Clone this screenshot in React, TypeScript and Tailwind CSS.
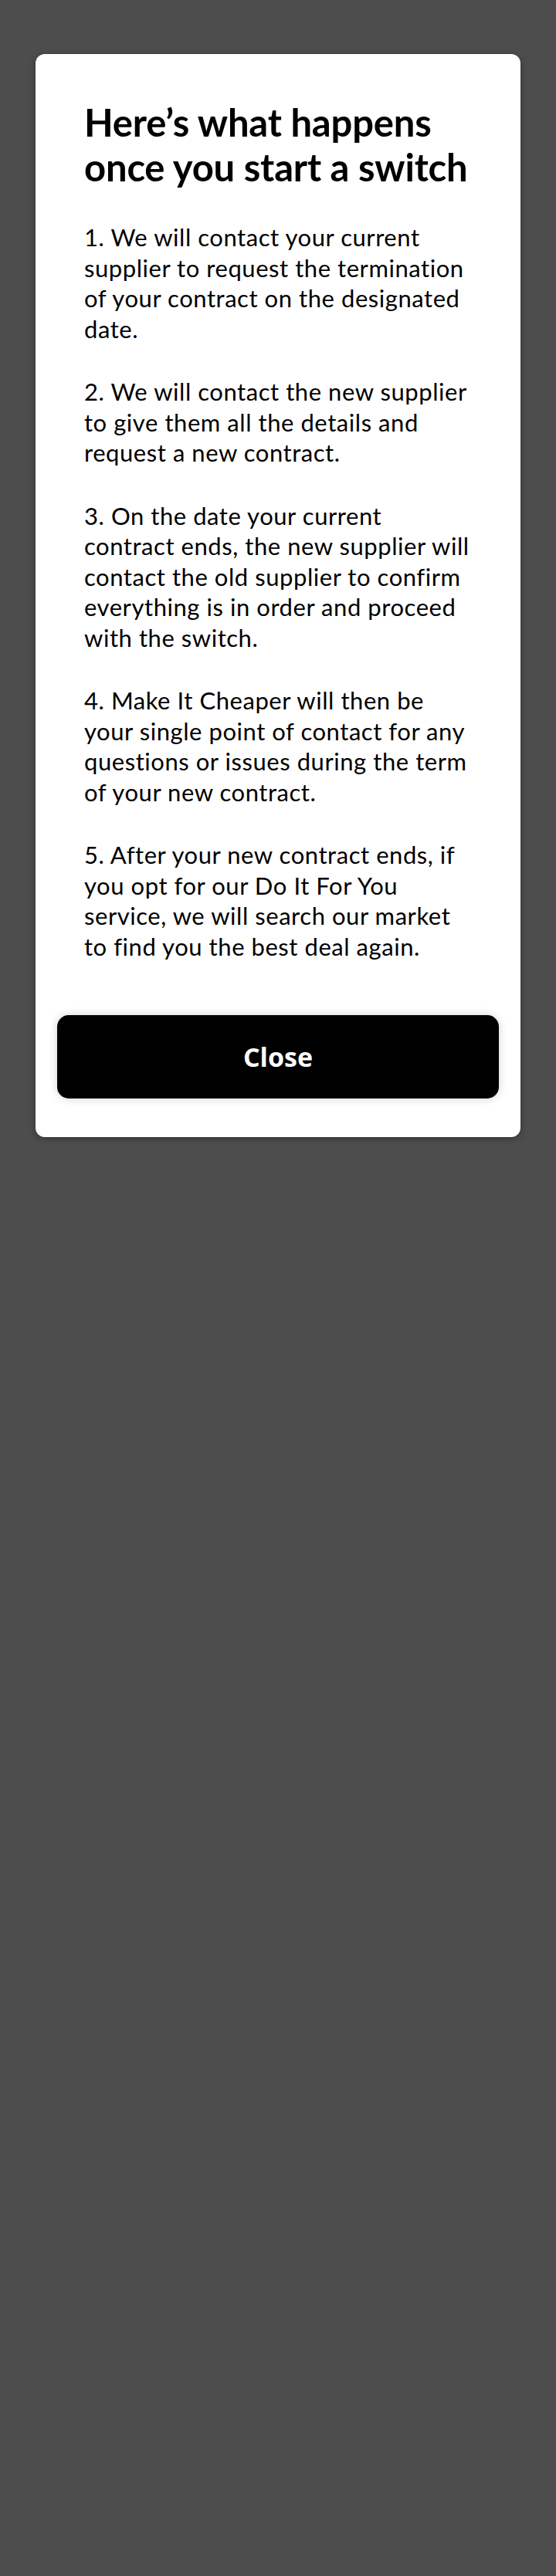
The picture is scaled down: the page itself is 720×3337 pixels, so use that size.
const steps: string[][] = [
  [
    "1. We will contact your current",
    "supplier to request the termination",
    "of your contract on the designated",
    "date.",
  ],
  [
    "2. We will contact the new supplier",
    "to give them all the details and",
    "request a new contract.",
  ],
  [
    "3. On the date your current",
    "contract ends, the new supplier will",
    "contact the old supplier to confirm",
    "everything is in order and proceed",
    "with the switch.",
  ],
  [
    "4. Make It Cheaper will then be",
    "your single point of contact for any",
    "questions or issues during the term",
    "of your new contract.",
  ],
  [
    "5. After your new contract ends, if",
    "you opt for our Do It For You",
    "service, we will search our market",
    "to find you the best deal again.",
  ],
];

export default function App() {
  return (
    <div className="min-h-[3337px] bg-[#4d4d4d] px-[46px] pt-[70px]">
      {/* Modal */}
      <div className="rounded-xl bg-white px-7 pt-[59px] pb-[50px] shadow-[0_2px_8px_rgba(0,0,0,0.35)]">
        <div className="px-[35px] font-['Lato',sans-serif] text-black">
          <h2 className="text-[49px] leading-[58px] font-bold tracking-[-0.2px]">
            Here’s what happens
            <br />
            once you start a switch
          </h2>
          {steps.map((lines, i) => (
            <p key={i} className="mt-[42px] text-[31px] leading-[39.5px] tracking-[0.55px] whitespace-nowrap first-of-type:mt-[43px]">
              {lines.map((line, j) => (
                <span key={j}>
                  {line}
                  {j < lines.length - 1 && <br />}
                </span>
              ))}
            </p>
          ))}
        </div>

        <button className="mt-[69px] flex h-[108px] w-full items-center justify-center rounded-[15px] bg-black font-['Open_Sans',sans-serif] text-[34px] font-bold text-white shadow-[0_0_12px_rgba(0,0,0,0.18)]">
          Close
        </button>
      </div>
    </div>
  );
}
